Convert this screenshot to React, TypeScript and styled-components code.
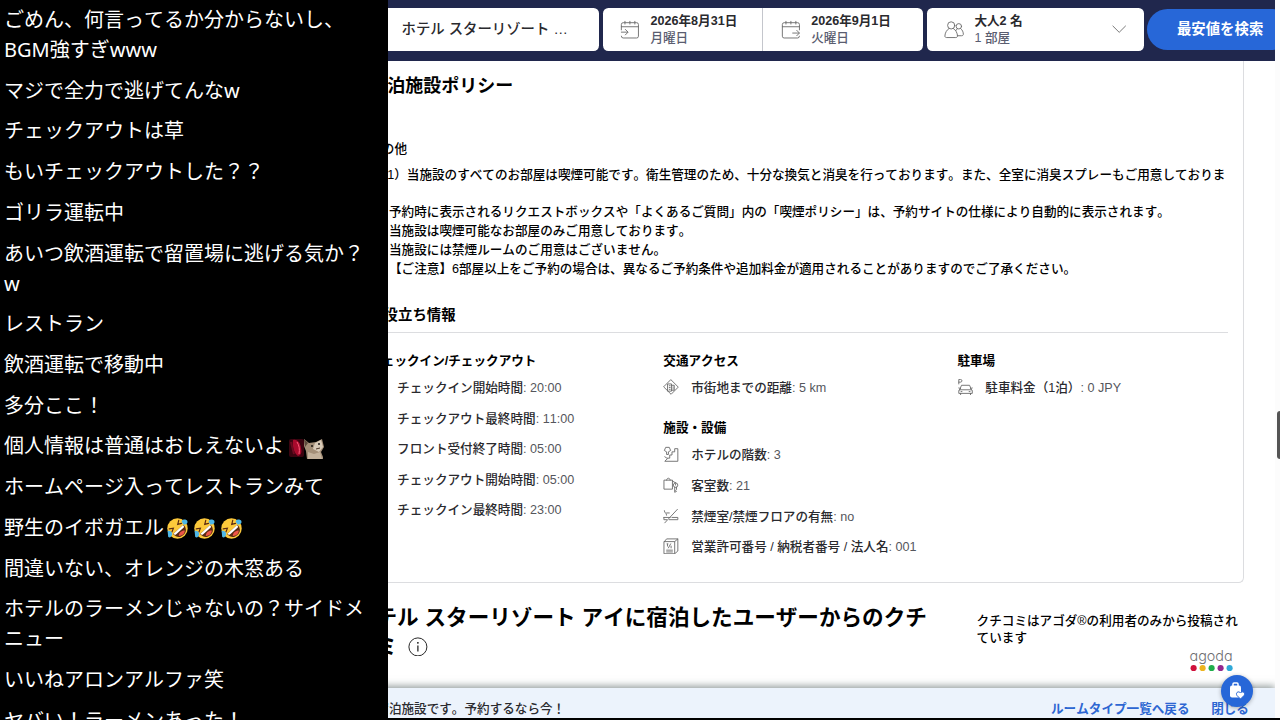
import React from "react";
import styled, { createGlobalStyle } from "styled-components";

const GlobalStyle = createGlobalStyle`
  * { box-sizing: border-box; }
  body { margin: 0; background: #000; font-kerning: none; }
  h2, h3, h4, p, ul, ol { margin: 0; padding: 0; }
  ul, ol { list-style: none; }
  button, input { font: inherit; border: 0; padding: 0; background: none; }
`;

const siteFont = `"Liberation Sans", "Noto Sans CJK JP", sans-serif`;

const Screen = styled.div`
  display: flex;
  height: 100vh;
  overflow: hidden;
  background: #000;
`;

/* ---------- chat ---------- */

const Chat = styled.aside`
  flex: 0 0 388px;
  overflow: hidden;
`;

const ChatList = styled.ol`
  display: flex;
  flex-direction: column;
  justify-content: space-between;
  height: calc(100vh + 16px);
  padding: 5px 16px 0 4px;
  color: #fff;
  font: 20px/30px "Noto Sans", "Noto Sans CJK JP", sans-serif;
  font-kerning: none;
`;

const ChatMessage = styled.li`
  white-space: pre-line;
`;

const EmojiSvg = styled.svg`
  width: 21px;
  height: 21px;
  margin: 0 3px 0 3px;
  vertical-align: -4px;
`;

const EmoteSvg = styled.svg`
  width: 36px;
  height: 21px;
  margin-left: 4px;
  vertical-align: -6px;
`;

const Rofl = () => (
  <EmojiSvg viewBox="0 0 36 36" role="img" aria-label="爆笑">
    <circle cx="18" cy="18" r="17.5" fill="#fdc93b" />
    <g transform="rotate(-42 18 18)">
      <path d="M6 20c0 9 5 13 12 13s12-4 12-13z" fill="#5a2a12" />
      <path d="M7 20h22c0 3-1 4-2 4H9c-1 0-2-1-2-4z" fill="#fff" />
      <path d="M11 29c4-4 10-4 14 0-4 4-10 4-14 0z" fill="#ee5548" />
      <path d="M7 9l6 4-6 3M29 9l-6 4 6 3" fill="none" stroke="#5a2a12" strokeWidth="2" strokeLinecap="round" />
    </g>
    <path d="M25 6c2-5 8-4 10-1 1 4-2 7-7 6zM1 22c4-1 8 1 8 6-1 5-5 7-7 4z" fill="#4fb8e8" />
  </EmojiSvg>
);

const CatEmote = () => (
  <EmoteSvg viewBox="0 0 36 21" role="img" aria-label="猫">
    <rect x="1" y="1" width="15" height="18" rx="2" fill="#3a0410" />
    <path d="M5 2c5-1 7 3 8 8s0 7-3 8c-4-3-6-9-5-16z" fill="#a80a2c" />
    <path d="M9 4c2 3 3 7 2 12" fill="none" stroke="#ff5d7c" strokeWidth="1" />
    <path d="M3 4l3 12" stroke="#6f0a20" strokeWidth="2" />
    <path d="M16 1l5 4 7-1 6-3 2 8-3 5 2 5v2H19l-1-8-2-5z" fill="#a48f78" />
    <path d="M27 5l6-3 2 7-4 5-6-3z" fill="#d8cab8" />
    <path d="M16 1l4 4-3 4z" fill="#5b4a3b" />
    <path d="M20 14l6 2 6-2 2 7H20z" fill="#c4b29c" />
    <circle cx="24" cy="8" r="1" fill="#1d1713" />
    <circle cx="31" cy="6" r="1" fill="#1d1713" />
    <path d="M28 11l4-1" stroke="#4a3527" strokeWidth="1" />
  </EmoteSvg>
);

const messages: React.ReactNode[] = [
  "ごめん、何言ってるか分からないし、\nBGM強すぎwww",
  "マジで全力で逃げてんなw",
  "チェックアウトは草",
  "もいチェックアウトした？？",
  "ゴリラ運転中",
  "あいつ飲酒運転で留置場に逃げる気か？\nw",
  "レストラン",
  "飲酒運転で移動中",
  "多分ここ！",
  <>個人情報は普通はおしえないよ<CatEmote /></>,
  "ホームページ入ってレストランみて",
  <>野生のイボガエル<Rofl /><Rofl /><Rofl /></>,
  "間違いない、オレンジの木窓ある",
  "ホテルのラーメンじゃないの？サイドメ\nニュー",
  "いいねアロンアルファ笑",
  "ヤバい！ラーメンあった！",
];

/* ---------- browser pane ---------- */

const Browser = styled.div`
  flex: 1;
  min-width: 0;
  display: flex;
  margin-bottom: 2px;
  background: #fff;
`;

const Viewport = styled.div`
  flex: 1;
  min-width: 0;
  position: relative;
  overflow: hidden;
`;

/* The hotel page is shown at the browser's 90% zoom level. */
const Page = styled.div`
  zoom: 0.9;
  display: flex;
  flex-direction: column;
  height: 100%;
  color: #000;
  font: 500 14px/21px ${siteFont};
  font-kerning: none;
`;

const ScrollTrack = styled.div`
  flex: 0 0 5px;
  display: flex;
  justify-content: flex-end;
  align-items: flex-start;
  padding-top: 411px;
  background: #fcfcfc;
`;

const ScrollThumb = styled.div`
  width: 3px;
  height: 48px;
  border-radius: 3px 0 0 3px;
  background: #555;
`;

/* ---------- search bar ---------- */

const SearchBar = styled.form`
  flex: none;
  display: flex;
  align-items: center;
  gap: 4px;
  height: 68px;
  margin: 0 -20px 0 -38px;
  padding-bottom: 2px;
  background: #20274d;
`;

const Field = styled.div`
  display: flex;
  height: 48px;
  border-radius: 6px;
  background: #fff;
  overflow: hidden;
`;

const HotelField = styled(Field)`
  flex: 1;
  min-width: 0;
`;

const HotelInput = styled.input`
  width: 100%;
  padding-left: 53px;
  color: #2a2a2e;
  font-size: 16px;
  outline: 0;
`;

const DateField = styled(Field)`
  flex: 0 0 356px;
`;

const Picker = styled.button`
  flex: 1;
  display: flex;
  align-items: center;
  gap: 12px;
  padding: 0 19px;
  text-align: left;
  line-height: 19px;
  & + & { border-left: 1px solid #c4c6cc; }
`;

const GuestField = styled(Field)`
  flex: 0 0 241px;
`;

const PickerText = styled.span`
  flex: 1;
  display: flex;
  flex-direction: column;
  color: #5a5d70;
`;

const Strong = styled.strong`
  color: #2a2a2e;
`;

const SearchButton = styled.button`
  flex: 0 0 162px;
  height: 46px;
  border-radius: 23px;
  background: #2767d8;
  color: #fff;
  font-size: 16px;
  font-weight: 700;
`;

const LineIcon = styled.svg<{ $size: number }>`
  flex: none;
  width: ${(p) => p.$size}px;
  height: ${(p) => p.$size}px;
  fill: none;
  stroke: #6a6a6a;
  stroke-width: 1;
  stroke-linejoin: round;
  stroke-linecap: round;
`;

const CalendarIcon = ({ out }: { out?: boolean }) => (
  <LineIcon $size={22} viewBox="0 0 22 22" aria-hidden="true">
    {out ? (
      <>
        <path d="M20.500 11V5a2 2 0 0 0-2-2h-15a2 2 0 0 0-2 2v13a2 2 0 0 0 2 2h15a2 2 0 0 0 2-2M1.500 7.500h19M5.500 1.500v3M11 1.500v3M16.500 1.500v3" />
        <path d="M13 14.500h7M17.500 11.500l3 3-3 3" />
      </>
    ) : (
      <>
        <path d="M1.500 11V5a2 2 0 0 1 2-2h15a2 2 0 0 1 2 2v13a2 2 0 0 1-2 2h-15a2 2 0 0 1-2-2M1.500 7.500h19M5.500 1.500v3M11 1.500v3M16.500 1.500v3" />
        <path d="M1.500 13.500h7M6 10.500l3 3-3 3" />
      </>
    )}
  </LineIcon>
);

const GuestsIcon = () => (
  <LineIcon $size={22} viewBox="0 0 22 22" aria-hidden="true">
    <circle cx="8" cy="6" r="4" />
    <path d="M5.500 9.500C3 11 1 14.500 1 18c0 1 1 1.500 2 1.500h10c1 0 2-.5 2-1.500 0-3.500-2-7-4.500-8.500" />
    <circle cx="16.500" cy="7" r="3" />
    <path d="M14.500 10l-1 1.500M18.500 9.500c2 1.500 3 4 3 6.500 0 1-1 1.500-2 1.500H15" />
  </LineIcon>
);

/* ---------- policy card ---------- */

const Content = styled.main`
  flex: 1;
  min-height: 0;
  overflow: hidden;
  margin: 0 35px 0 -38px;
`;

const Card = styled.section`
  padding: 16px 16px 28px;
  border: 1px solid #dcdde0;
  border-top: 0;
  border-radius: 0 0 6px 6px;
`;

const CardTitle = styled.h2`
  margin-bottom: 48px;
  font-size: 20px;
  line-height: 24px;
`;

const GroupTitle = styled.h4`
  margin-bottom: 9px;
  font-size: 14px;
  line-height: 21px;
`;

const NoteTitle = styled(GroupTitle)`
  margin-bottom: 7px;
  font-weight: 500;
`;

const Note = styled.p`
  text-indent: 6px;
`;

const NoteList = styled.ul`
  margin-bottom: 29px;
  padding-left: 22px;
`;

const InfoTitle = styled.h3`
  margin-bottom: 21px;
  padding-bottom: 6px;
  border-bottom: 1px solid #dcdde0;
  font-size: 16px;
  line-height: 24px;
`;

const InfoGrid = styled.div`
  display: grid;
  grid-template-columns: repeat(3, 1fr);
  gap: 26px;
`;

const InfoColumn = styled.div`
  display: flex;
  flex-direction: column;
  gap: 24px;
`;

const InfoList = styled.ul`
  display: flex;
  flex-direction: column;
  gap: 13px;
`;

const InfoItem = styled.li`
  display: grid;
  grid-template-columns: 31px 1fr;
  height: 21px;
  color: #2a2a2e;
  white-space: nowrap;
`;

const Value = styled.span`
  color: #55565c;
  font-weight: 400;
`;

const ic = {
  clock: <path d="M9 1.500a7.500 7.500 0 1 0 0 15 7.500 7.500 0 0 0 0-15M9 5v4l3 2" />,
  city: <path d="M9 1l8 8-8 8-8-8zM5.500 5.500h4v8h-4zM9.500 7h3v5.500h-3M7 7.500h1M7 9.500h1M7 11.500h1M11 9h.5M11 11h.5" />,
  stairs: <path d="M4 9V6.500L1.500 5 3 1.500h4L8.500 5 6 6.500V9zM2 12l3 2-3 3h14.500V3H13v3.500h-3V10H7.500v3.500H5" />,
  rooms: <path d="M1.500 3.500h9v10h-9zM4 3.500C4 .5 8 .5 8 3.500M14 6.500a2.500 2.500 0 1 1 0 5 2.500 2.500 0 0 1 0-5M14 8v1M13 11.500V17l2-1-1-1 1-1v-2.500M10.500 4.500L14 6.500" />,
  smoke: <path d="M1 10.500h7M10 10.500h6.500V13H7M4 13H1v-2.500M16 1.500L2 16.500M4 8c0-3-2.500-2-2.500-5M4 5.500h3" />,
  license: <path d="M1.500 4h11.500v13.500H1.500zM1.500 4L4 1h12.500v13.500L13 17.500M13 4l3.500-3M4 13.500h6.500M4 15.500h6.500M5 7v2M8.500 6.500L6 11M9 9v2M4.500 6.500h1" />,
  parking: <path d="M2 5.500v-5h2c2 0 2 3 0 3H2M3 12l2-5h9l2 5M3 12h13a1 1 0 0 1 1 1v3H2v-3a1 1 0 0 1 1-1M4 16v1.500M15 16v1.500M4.500 14h1M13.500 14h1M2 10l2 .5M17 10l-2 .5" />,
};

type Item = { icon: keyof typeof ic; label: string; value: string };

const Group = ({ title, items }: { title: string; items: Item[] }) => (
  <div>
    <GroupTitle>{title}</GroupTitle>
    <InfoList>
      {items.map((it) => (
        <InfoItem key={it.label}>
          <LineIcon $size={18} viewBox="0 0 18 18" aria-hidden="true">{ic[it.icon]}</LineIcon>
          <span>
            {it.label}
            <Value>: {it.value}</Value>
          </span>
        </InfoItem>
      ))}
    </InfoList>
  </div>
);

/* ---------- reviews ---------- */

const Reviews = styled.section`
  display: flex;
  justify-content: space-between;
  margin-top: 23px;
`;

const ReviewsTitle = styled.h2`
  flex: 0 0 66%;
  font-size: 24px;
  line-height: 32px;
`;

const InfoButton = styled.button`
  margin-left: 12px;
  vertical-align: -3px;
  line-height: 0;
`;

const ReviewsAside = styled.div`
  flex: 0 0 30%;
  padding-top: 10px;
  line-height: 19px;
`;

const Brand = styled.div`
  display: flex;
  flex-direction: column;
  align-items: flex-end;
  padding: 0 12px 0 0;
  color: #6f7073;
  font: 300 16px/20px Inter, sans-serif;
  font-feature-settings: "cv11";
`;

const BrandDots = styled.svg`
  width: 47px;
  height: 7px;
`;

/* ---------- bottom bar ---------- */

const BottomBar = styled.footer`
  flex: none;
  display: flex;
  gap: 24px;
  height: 33px;
  margin-left: -40px;
  padding: 13px 29px 0 0;
  background: #ecf3fc;
  box-shadow: 0 -2px 8px rgba(40, 60, 60, 0.5);
  color: #2a2a2e;
  white-space: nowrap;
`;

const BarText = styled.p`
  flex: 1;
  padding-left: 27px;
`;

const BarLink = styled.a`
  color: #2d66d2;
  font-weight: 700;
  text-decoration: none;
`;

const CartButton = styled.button`
  position: absolute;
  right: 22px;
  bottom: 11px;
  display: flex;
  align-items: center;
  justify-content: center;
  width: 32px;
  height: 32px;
  border-radius: 50%;
  background: #2767d8;
  box-shadow: 0 1px 4px rgba(0, 0, 0, 0.3);
`;

const dots = ["#d0103a", "#edb41f", "#1fae4b", "#93278f", "#2fa9d8"];

export default function App() {
  return (
    <Screen>
      <GlobalStyle />
      <Chat aria-label="チャット">
        <ChatList>
          {messages.map((m, i) => (
            <ChatMessage key={i}>{m}</ChatMessage>
          ))}
        </ChatList>
      </Chat>
      <Browser>
        <Viewport>
          <Page>
            <SearchBar onSubmit={(e) => e.preventDefault()}>
              <HotelField>
                <HotelInput aria-label="目的地" defaultValue="ホテル スターリゾート …" />
              </HotelField>
              <DateField>
                <Picker type="button">
                  <CalendarIcon />
                  <PickerText><Strong>2026年8月31日</Strong>月曜日</PickerText>
                </Picker>
                <Picker type="button">
                  <CalendarIcon out />
                  <PickerText><Strong>2026年9月1日</Strong>火曜日</PickerText>
                </Picker>
              </DateField>
              <GuestField>
                <Picker type="button">
                  <GuestsIcon />
                  <PickerText><Strong>大人2 名</Strong>1 部屋</PickerText>
                  <LineIcon $size={16} viewBox="0 0 16 16" aria-hidden="true">
                    <path d="M1 4.500l7 7 7-7" />
                  </LineIcon>
                </Picker>
              </GuestField>
              <SearchButton>最安値を検索</SearchButton>
            </SearchBar>

            <Content>
              <Card>
                <CardTitle>宿泊施設ポリシー</CardTitle>
                <NoteTitle>その他</NoteTitle>
                <Note>
                  （1）当施設のすべてのお部屋は喫煙可能です。衛生管理のため、十分な換気と消臭を行っております。また、全室に消臭スプレーもご用意しております。
                </Note>
                <NoteList>
                  <li>予約時に表示されるリクエストボックスや「よくあるご質問」内の「喫煙ポリシー」は、予約サイトの仕様により自動的に表示されます。</li>
                  <li>当施設は喫煙可能なお部屋のみご用意しております。</li>
                  <li>当施設には禁煙ルームのご用意はございません。</li>
                  <li>【ご注意】6部屋以上をご予約の場合は、異なるご予約条件や追加料金が適用されることがありますのでご了承ください。</li>
                </NoteList>
                <InfoTitle>お役立ち情報</InfoTitle>
                <InfoGrid>
                  <InfoColumn>
                    <Group
                      title="チェックイン/チェックアウト"
                      items={[
                        { icon: "clock", label: "チェックイン開始時間", value: "20:00" },
                        { icon: "clock", label: "チェックアウト最終時間", value: "11:00" },
                        { icon: "clock", label: "フロント受付終了時間", value: "05:00" },
                        { icon: "clock", label: "チェックアウト開始時間", value: "05:00" },
                        { icon: "clock", label: "チェックイン最終時間", value: "23:00" },
                      ]}
                    />
                  </InfoColumn>
                  <InfoColumn>
                    <Group title="交通アクセス" items={[{ icon: "city", label: "市街地までの距離", value: "5 km" }]} />
                    <Group
                      title="施設・設備"
                      items={[
                        { icon: "stairs", label: "ホテルの階数", value: "3" },
                        { icon: "rooms", label: "客室数", value: "21" },
                        { icon: "smoke", label: "禁煙室/禁煙フロアの有無", value: "no" },
                        { icon: "license", label: "営業許可番号 / 納税者番号 / 法人名", value: "001" },
                      ]}
                    />
                  </InfoColumn>
                  <InfoColumn>
                    <Group title="駐車場" items={[{ icon: "parking", label: "駐車料金（1泊）", value: "0 JPY" }]} />
                  </InfoColumn>
                </InfoGrid>
              </Card>

              <Reviews>
                <ReviewsTitle>
                  ホテル スターリゾート アイに宿泊したユーザーからのクチコミ
                  <InfoButton aria-label="クチコミについて">
                    <svg width="22" height="22" viewBox="0 0 22 22" aria-hidden="true">
                      <circle cx="11" cy="11" r="10" fill="none" stroke="#111" strokeWidth="1" />
                      <circle cx="11" cy="6.500" r="1" fill="#111" />
                      <path d="M11 9.500V16" stroke="#111" strokeWidth="1.300" />
                    </svg>
                  </InfoButton>
                </ReviewsTitle>
                <ReviewsAside>
                  <p>クチコミはアゴダ®の利用者のみから投稿されています</p>
                  <Brand>
                    agoda
                    <BrandDots viewBox="0 0 47 7" aria-hidden="true">
                      {dots.map((c, i) => (
                        <circle key={c} cx={4 + i * 10} cy="3.500" r="3.400" fill={c} />
                      ))}
                    </BrandDots>
                  </Brand>
                </ReviewsAside>
              </Reviews>
            </Content>

            <BottomBar>
              <BarText>宿泊施設です。予約するなら今！</BarText>
              <BarLink href="#rooms">ルームタイプ一覧へ戻る</BarLink>
              <BarLink href="#close">閉じる</BarLink>
            </BottomBar>
          </Page>
          <CartButton aria-label="カート">
            <svg width="16" height="18" viewBox="0 0 16 18" aria-hidden="true">
              <path d="M4 4V2a1 1 0 0 1 1-1h3a1 1 0 0 1 1 1v2" fill="none" stroke="#fff" strokeWidth="1.500" />
              <rect x="1" y="3.500" width="11" height="12" rx="2" fill="#fff" />
              <path d="M11.500 17L8 13.500c-2-3 2-5 3.500-2.500 1.500-2.500 5.500-.5 3.500 2.500z" fill="#fff" stroke="#2767d8" strokeWidth="1" />
            </svg>
          </CartButton>
        </Viewport>
        <ScrollTrack>
          <ScrollThumb />
        </ScrollTrack>
      </Browser>
    </Screen>
  );
}
